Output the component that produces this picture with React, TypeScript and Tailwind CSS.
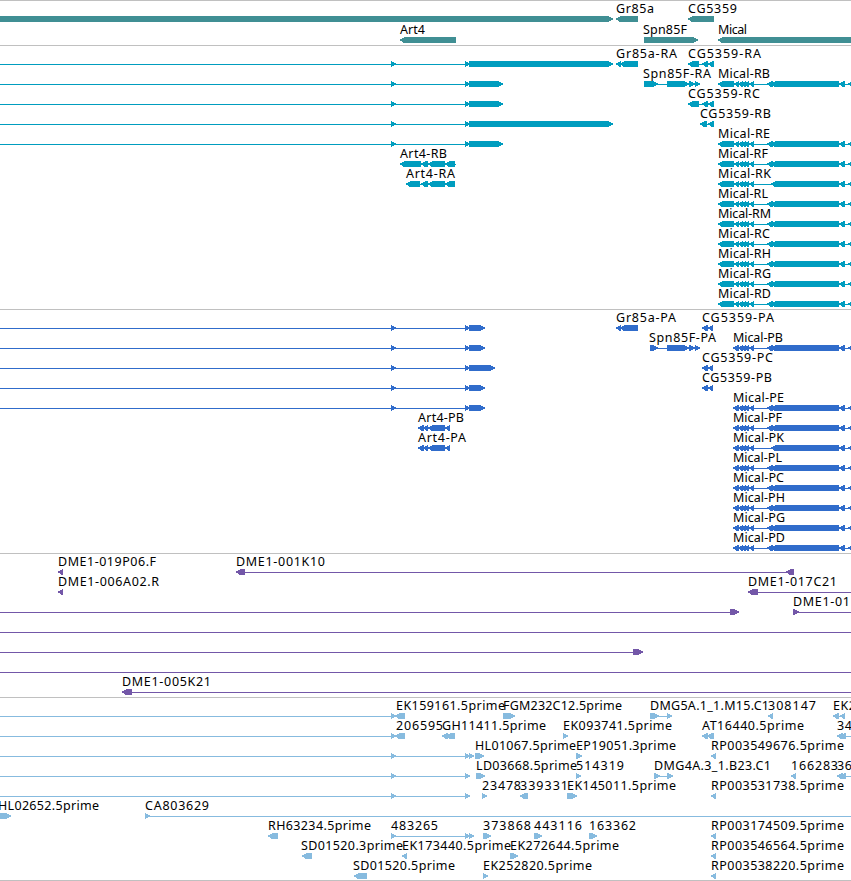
type Dir = 'L' | 'R';
type Arrow = [start: number, end: number, dir: Dir];
type Line = [start: number, end: number];

interface Feature {
  label?: string;
  x?: number;
  width?: number;
  lines?: Line[];
  arrows: Arrow[];
}

interface TrackData {
  name: string;
  height: string;
  color: string;
  pitch: number;
  rows: Feature[][];
}

const EDGE = 851;

const feature = (
  label: string,
  x: number,
  end: number,
  arrows: Arrow[],
  lines: Line[] = [],
): Feature => ({ label, x, width: end - x, arrows, lines });

const plain = (lines: Line[], arrows: Arrow[] = []): Feature => ({ lines, arrows });

// Long gene entering from the left, shared by transcripts and proteins
const spliced = (end: number) =>
  plain([[0, 469]], [[391, 396, 'R'], [465, 470, 'R'], [469, end, 'R']]);

const micalTail = (short: boolean): Arrow[] => [
  [738, 743, 'L'],
  [741, 746, 'L'],
  [744, 749, 'L'],
  [749, 754, 'L'],
  ...(short ? [] : ([[767, 773, 'L']] as Arrow[])),
  [771, 839, 'L'],
  [839, 845, 'L'],
  [848, 854, 'L'],
];

const micalR = (id: string, end: number) =>
  feature(`Mical-${id}`, 718, end, [[718, 734, 'L'], [734, 739, 'L'], ...micalTail(id === 'RK')], [[734, EDGE]]);

const micalP = (id: string, end: number) =>
  feature(`Mical-${id}`, 733, end, [[733, 739, 'L'], ...micalTail(id === 'PK')], [[738, EDGE]]);

const gr85a: Arrow[] = [[616, 621, 'L'], [620, 638, 'L']];
const spnEnd: Arrow[] = [[667, 689, 'R'], [689, 695, 'R'], [695, 700, 'R']];
const cgLong: Arrow[] = [[688, 699, 'L'], [702, 708, 'L'], [708, 714, 'L']];
const cgProtein: Arrow[] = [[702, 708, 'L'], [708, 713, 'L']];
const art4Protein: Arrow[] = [[418, 424, 'L'], [423, 428, 'L'], [428, 445, 'L'], [445, 450, 'L']];

const rp = (id: string) => feature(`RP${id}.5prime`, 711, 844, [[711, 716, 'L']]);

const tracks: TrackData[] = [
  {
    name: 'genes',
    height: 'h-[45px]',
    color: '#408f94',
    pitch: 21,
    rows: [
      [
        plain([], [[-5, 613, 'R']]),
        feature('Gr85a', 616, 654, [[616, 638, 'L']]),
        feature('CG5359', 688, 737, [[688, 714, 'L']]),
      ],
      [
        feature('Art4', 400, 425, [[400, 456, 'L']]),
        feature('Spn85F', 643, 687, [[644, 698, 'R']]),
        feature('Mical', 718, 747, [[718, 860, 'L']]),
      ],
    ],
  },
  {
    name: 'transcripts',
    height: 'h-[264px]',
    color: '#009dbf',
    pitch: 20,
    rows: [
      [
        spliced(613),
        feature('Gr85a-RA', 616, 677, gr85a),
        feature('CG5359-RA', 688, 761, cgLong, [[699, 714]]),
      ],
      [
        spliced(503),
        feature('Spn85F-RA', 643, 711, [[644, 658, 'R'], ...spnEnd], [[658, 700]]),
        micalR('RB', 770),
      ],
      [spliced(503), feature('CG5359-RC', 688, 760, cgLong, [[699, 714]])],
      [spliced(613), feature('CG5359-RB', 700, 771, [[700, 707, 'L'], [708, 714, 'L']], [[706, 714]])],
      [spliced(503), micalR('RE', 770)],
      [
        feature(
          'Art4-RB', 400, 447,
          [[400, 421, 'L'], [421, 428, 'L'], [428, 445, 'L'], [445, 455, 'L']],
          [[421, 456]],
        ),
        micalR('RF', 768),
      ],
      [
        feature(
          'Art4-RA', 406, 455,
          [[406, 420, 'L'], [421, 428, 'L'], [428, 445, 'L'], [445, 455, 'L']],
          [[420, 455]],
        ),
        micalR('RK', 771),
      ],
      [micalR('RL', 768)],
      [micalR('RM', 771)],
      [micalR('RC', 770)],
      [micalR('RH', 771)],
      [micalR('RG', 771)],
      [micalR('RD', 771)],
    ],
  },
  {
    name: 'proteins',
    height: 'h-[244px]',
    color: '#306ccb',
    pitch: 20,
    rows: [
      [
        spliced(485),
        feature('Gr85a-PA', 616, 676, gr85a),
        feature('CG5359-PA', 702, 774, cgProtein),
      ],
      [
        spliced(485),
        feature('Spn85F-PA', 649, 716, [[650, 658, 'R'], ...spnEnd], [[656, 700]]),
        micalP('PB', 783),
      ],
      [spliced(495), feature('CG5359-PC', 702, 773, cgProtein)],
      [spliced(485), feature('CG5359-PB', 702, 772, cgProtein)],
      [spliced(485), micalP('PE', 784)],
      [feature('Art4-PB', 418, 464, art4Protein, [[423, 450]]), micalP('PF', 782)],
      [feature('Art4-PA', 418, 466, art4Protein, [[423, 450]]), micalP('PK', 784)],
      [micalP('PL', 782)],
      [micalP('PC', 784)],
      [micalP('PH', 785)],
      [micalP('PG', 785)],
      [micalP('PD', 785)],
    ],
  },
  {
    name: 'clones',
    height: 'h-[144px]',
    color: '#7357a8',
    pitch: 20,
    rows: [
      [
        feature('DME1-019P06.F', 58, 156, [[58, 63, 'L']]),
        feature('DME1-001K10', 236, 325, [[236, 245, 'L'], [786, 794, 'L']], [[245, 788]]),
      ],
      [
        feature('DME1-006A02.R', 58, 159, [[58, 63, 'L']]),
        feature('DME1-017C21', 748, 837, [[748, 758, 'L']], [[758, EDGE]]),
      ],
      [
        plain([[0, 738]], [[730, 739, 'R']]),
        feature('DME1-01', 793, 850, [[793, 799, 'R']], [[797, EDGE]]),
      ],
      [plain([[0, EDGE]])],
      [plain([[0, 642]], [[633, 643, 'R']])],
      [plain([[0, EDGE]])],
      [feature('DME1-005K21', 122, 211, [[122, 132, 'L']], [[132, EDGE]])],
    ],
  },
  {
    name: 'ests',
    height: 'h-[183px]',
    color: '#87bbdf',
    pitch: 20,
    rows: [
      [
        plain([[0, 396]], [[391, 396, 'R']]),
        feature('EK159161.5prime', 396, 505, [[395, 405, 'L']]),
        feature('FGM232C12.5prime', 503, 622, [[503, 515, 'R']]),
        feature('DMG5A.1_1.M15.C1', 650, 769, [[650, 659, 'R'], [667, 672, 'R']], [[656, 671]]),
        feature('308147', 768, 816, [[768, 773, 'L']]),
        feature('EK2', 833, 856, [[833, 839, 'L'], [840, 845, 'L']], [[838, 843]]),
      ],
      [
        plain([[0, 396]], [[391, 396, 'R']]),
        feature('206595', 396, 443, [[395, 405, 'L']]),
        feature('GH11411.5prime', 442, 546, [[442, 448, 'L'], [446, 455, 'L']]),
        feature('EK093741.5prime', 563, 672, [[563, 568, 'R']]),
        feature('AT16440.5prime', 702, 804, [[702, 708, 'L'], [707, 714, 'L']]),
        feature('34', 837, 852, [[837, 843, 'L'], [840, 846, 'L']], [[843, EDGE]]),
      ],
      [
        plain([[0, 474]], [[391, 396, 'R'], [465, 470, 'R'], [469, 474, 'R']]),
        feature('HL01067.5prime', 475, 576, [[475, 484, 'R']]),
        feature('EP19051.3prime', 576, 676, [[576, 582, 'R']]),
        rp('003549676'),
      ],
      [
        plain([[0, 469]], [[391, 396, 'R'], [465, 470, 'R']]),
        feature('LD03668.5prime', 476, 577, [[476, 485, 'R']]),
        feature('514319', 576, 624, [[576, 581, 'R']]),
        feature('DMG4A.3_1.B23.C1', 654, 771, [[654, 660, 'R'], [667, 673, 'R']], [[658, 671]]),
        feature('166283', 791, 838, [[791, 796, 'L']]),
        feature('36', 837, 852, [[837, 843, 'L'], [840, 846, 'L']], [[843, EDGE]]),
      ],
      [
        plain([[0, 469]], [[391, 396, 'R'], [465, 470, 'R']]),
        feature('23478', 482, 521, [[482, 487, 'R']]),
        feature('339331', 520, 568, [[520, 528, 'L']]),
        feature('EK145011.5prime', 567, 676, [[567, 577, 'R']]),
        rp('003531738'),
      ],
      [
        feature('HL02652.5prime', -2, 99, [[-5, 11, 'R']]),
        feature('CA803629', 145, 209, [[145, 150, 'R']], [[148, EDGE]]),
      ],
      [
        feature('RH63234.5prime', 268, 371, [[268, 278, 'L']]),
        feature('483265', 391, 438, [[391, 396, 'R'], [465, 470, 'R'], [469, 474, 'R']], [[394, 472]]),
        feature('373868', 483, 531, [[483, 491, 'R']]),
        feature('443116', 534, 582, [[534, 542, 'R']]),
        feature('163362', 589, 636, [[589, 597, 'R']]),
        rp('003174509'),
      ],
      [
        feature('SD01520.3prime', 301, 403, [[302, 312, 'L']]),
        feature('EK173440.5prime', 402, 511, [[402, 407, 'L']]),
        feature('EK272644.5prime', 510, 619, [[510, 518, 'R']]),
        rp('003546564'),
      ],
      [
        feature('SD01520.5prime', 353, 455, [[354, 367, 'L']]),
        feature('EK252820.5prime', 483, 592, [[483, 488, 'R']]),
        rp('003538220'),
      ],
    ],
  },
];

const arrowPoints = ([start, end, dir]: Arrow) => {
  const [back, tip, step] = dir === 'R' ? [start, end, -1] : [end, start, 1];
  return [
    `${back},16`,
    `${tip + step * 5},16`,
    `${tip + step * 0.7},18`,
    `${tip - step * 0.4},18.7`,
    `${tip + step * 0.8},20`,
    `${tip + step * 4.4},22`,
    `${back},22`,
  ].join(' ');
};

const FeatureGlyph = ({ feature, color }: { feature: Feature; color: string }) => (
  <>
    <g fill={color} shapeRendering="crispEdges">
      {feature.lines?.map(([start, end]) => (
        <rect key={start} x={start} y={19} width={end - start} height={1} />
      ))}
      {feature.arrows.map((arrow) => (
        <polygon key={arrow[0]} points={arrowPoints(arrow)} />
      ))}
    </g>
    {feature.label && (
      <text x={feature.x} y={13} textLength={feature.width} className="fill-black">
        {feature.label}
      </text>
    )}
  </>
);

const Track = ({ track }: { track: TrackData }) => (
  <section aria-label={track.name} className={`${track.height} w-full shrink-0 border-t border-[#c0c0c0]`}>
    {/* starts on the border row, so y = 0 is the separator itself */}
    <svg width={EDGE} height="100%" className="-mt-px block overflow-hidden">
      {track.rows.map((row, i) => (
        <g key={i} transform={`translate(0 ${i * track.pitch})`}>
          {row.map((item, j) => (
            <FeatureGlyph key={j} feature={item} color={track.color} />
          ))}
        </g>
      ))}
    </svg>
  </section>
);

const App = () => (
  <main className="flex h-[881px] w-[851px] flex-col overflow-hidden border-b border-[#c0c0c0] bg-white font-['Noto_Sans',sans-serif] text-[12.5px]">
    {tracks.map((track) => (
      <Track key={track.name} track={track} />
    ))}
  </main>
);

export default App;
